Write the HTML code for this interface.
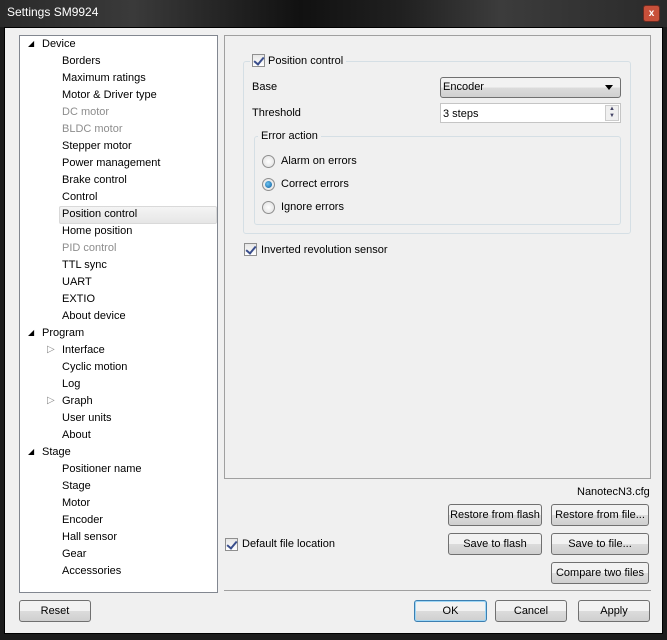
<!DOCTYPE html>
<html><head><style>
*{box-sizing:border-box}
body{margin:0;width:667px;height:640px;background:#1c1c1c;font-family:"Liberation Sans",sans-serif;font-size:11px;color:#000;position:relative;overflow:hidden}
.title{position:absolute;left:0;top:0;width:667px;height:27px;background:linear-gradient(90deg,#2a2a2a 0%,#3a3a3a 20%,#111 45%,#202020 60%,#3c3c3c 75%,#2a2a2a 100%)}
.title span{position:absolute;left:7px;top:5px;color:#fff;font-size:12px}
.close{position:absolute;left:643px;top:5px;width:17px;height:17px;background:#c8503a;border:1px solid #6a2a20;border-radius:3px;color:#fff;font-size:10px;font-weight:bold;text-align:center;line-height:15px}
.client{position:absolute;left:4px;top:27px;width:659px;height:607px;background:#f0f0f0;border:1px solid #000}
.a{position:absolute;white-space:nowrap}
.tree{position:absolute;left:19px;top:35px;width:199px;height:558px;background:#fff;border:1px solid #828790}
.panel{position:absolute;left:224px;top:35px;width:427px;height:444px;background:#f0f0f0;border:1px solid #a0a0a0}
.grp{position:absolute;border:1px solid #d5dfe5;border-radius:3px}
.cb{position:absolute;width:13px;height:13px;border:1px solid #8f8f8f;background:linear-gradient(#e6e6e6,#fff);}
.cb:after{content:"";position:absolute;left:3px;top:0px;width:4px;height:8px;border:solid #3a4e8c;border-width:0 2px 2px 0;transform:rotate(40deg)}
.rb{position:absolute;width:13px;height:13px;border:1px solid #8f8f8f;border-radius:50%;background:radial-gradient(#fff,#ddd)}
.rb.on:after{content:"";position:absolute;left:2px;top:2px;width:7px;height:7px;border-radius:50%;background:radial-gradient(circle at 40% 40%,#6cc3f0,#0a5a9c)}
.btn{position:absolute;height:22px;border:1px solid #707070;border-radius:3px;background:linear-gradient(#f2f2f2 50%,#dcdcdc 50%,#cfcfcf);text-align:center;line-height:20px;white-space:nowrap}
.g{color:#8d8d8d}
</style></head><body>
<div class="title"><span>Settings SM9924</span><div class="close">x</div></div>
<div class="client"></div>
<div class="tree">
<div class="a" style="left:39px;top:170px;width:158px;height:18px;background:linear-gradient(#f4f4f4,#e6e6e6);border:1px solid #d9d9d9;border-radius:2px"></div>
</div>
<div class="a" style="left:42px;top:38px">Device</div>
<div class="a" style="left:28px;top:39px;font-size:8px">&#9698;</div>
<div class="a" style="left:62px;top:55px">Borders</div>
<div class="a" style="left:62px;top:72px">Maximum ratings</div>
<div class="a" style="left:62px;top:89px">Motor &amp; Driver type</div>
<div class="a g" style="left:62px;top:106px">DC motor</div>
<div class="a g" style="left:62px;top:123px">BLDC motor</div>
<div class="a" style="left:62px;top:140px">Stepper motor</div>
<div class="a" style="left:62px;top:157px">Power management</div>
<div class="a" style="left:62px;top:174px">Brake control</div>
<div class="a" style="left:62px;top:191px">Control</div>
<div class="a" style="left:62px;top:208px">Position control</div>
<div class="a" style="left:62px;top:225px">Home position</div>
<div class="a g" style="left:62px;top:242px">PID control</div>
<div class="a" style="left:62px;top:259px">TTL sync</div>
<div class="a" style="left:62px;top:276px">UART</div>
<div class="a" style="left:62px;top:293px">EXTIO</div>
<div class="a" style="left:62px;top:310px">About device</div>
<div class="a" style="left:28px;top:328px;font-size:8px">&#9698;</div>
<div class="a" style="left:42px;top:327px">Program</div>
<div class="a" style="left:47px;top:344px;font-size:10px;color:#888">&#9655;</div>
<div class="a" style="left:62px;top:344px">Interface</div>
<div class="a" style="left:62px;top:361px">Cyclic motion</div>
<div class="a" style="left:62px;top:378px">Log</div>
<div class="a" style="left:47px;top:395px;font-size:10px;color:#888">&#9655;</div>
<div class="a" style="left:62px;top:395px">Graph</div>
<div class="a" style="left:62px;top:412px">User units</div>
<div class="a" style="left:62px;top:429px">About</div>
<div class="a" style="left:28px;top:447px;font-size:8px">&#9698;</div>
<div class="a" style="left:42px;top:446px">Stage</div>
<div class="a" style="left:62px;top:463px">Positioner name</div>
<div class="a" style="left:62px;top:480px">Stage</div>
<div class="a" style="left:62px;top:497px">Motor</div>
<div class="a" style="left:62px;top:514px">Encoder</div>
<div class="a" style="left:62px;top:531px">Hall sensor</div>
<div class="a" style="left:62px;top:548px">Gear</div>
<div class="a" style="left:62px;top:565px">Accessories</div>

<div class="panel"></div>
<div class="grp" style="left:243px;top:61px;width:388px;height:173px"></div>
<div class="a" style="left:250px;top:54px;width:96px;height:14px;background:#f0f0f0"></div>
<div class="cb" style="left:252px;top:54px"></div>
<div class="a" style="left:268px;top:55px">Position control</div>
<div class="a" style="left:252px;top:81px">Base</div>
<div class="a" style="left:440px;top:77px;width:181px;height:21px;border:1px solid #707070;border-radius:3px;background:linear-gradient(#f2f2f2 50%,#dcdcdc 50%,#d0d0d0)"></div>
<div class="a" style="left:443px;top:81px">Encoder</div>
<div class="a" style="left:605px;top:85px;width:0;height:0;border-left:4px solid transparent;border-right:4px solid transparent;border-top:5px solid #000"></div>
<div class="a" style="left:252px;top:107px">Threshold</div>
<div class="a" style="left:440px;top:103px;width:181px;height:20px;background:#fff;border:1px solid #c5c5c5"></div>
<div class="a" style="left:443px;top:108px">3 steps</div>
<div class="a" style="left:605px;top:105px;width:14px;height:16px;border:1px solid #ccc;background:#f0f0f0;font-size:6px;line-height:7px;text-align:center;color:#446">▲<br>▼</div>
<div class="grp" style="left:254px;top:136px;width:367px;height:89px"></div>
<div class="a" style="left:258px;top:130px;padding:0 3px;background:#f0f0f0">Error action</div>
<div class="rb" style="left:262px;top:155px"></div><div class="a" style="left:281px;top:155px">Alarm on errors</div>
<div class="rb on" style="left:262px;top:178px"></div><div class="a" style="left:281px;top:178px">Correct errors</div>
<div class="rb" style="left:262px;top:201px"></div><div class="a" style="left:281px;top:201px">Ignore errors</div>
<div class="cb" style="left:244px;top:243px"></div>
<div class="a" style="left:261px;top:244px">Inverted revolution sensor</div>

<div class="a" style="left:577px;top:486px">NanotecN3.cfg</div>
<div class="btn" style="left:448px;top:504px;width:94px">Restore from flash</div>
<div class="btn" style="left:551px;top:504px;width:98px">Restore from file...</div>
<div class="cb" style="left:225px;top:538px"></div>
<div class="a" style="left:242px;top:538px">Default file location</div>
<div class="btn" style="left:448px;top:533px;width:94px">Save to flash</div>
<div class="btn" style="left:551px;top:533px;width:98px">Save to file...</div>
<div class="btn" style="left:551px;top:562px;width:98px">Compare two files</div>
<div class="a" style="left:224px;top:590px;width:427px;height:1px;background:#a0a0a0"></div>
<div class="btn" style="left:19px;top:600px;width:72px">Reset</div>
<div class="btn" style="left:414px;top:600px;width:73px;border-color:#3c7fb1;box-shadow:inset 0 0 0 1px #9ed6f5">OK</div>
<div class="btn" style="left:495px;top:600px;width:72px">Cancel</div>
<div class="btn" style="left:578px;top:600px;width:72px">Apply</div>
</body></html>
